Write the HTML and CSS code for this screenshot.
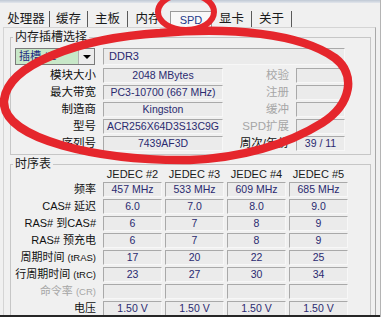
FILE: index.html
```html
<!DOCTYPE html>
<html>

<head>
    <meta charset="utf-8">
    <link rel="stylesheet" href="styles.css">
</head>

<body>
    <div id="window">
        <div class="topline"></div>

        <div class="tabs">
            <div class="tab">处理器</div>
            <div class="tab">缓存</div>
            <div class="tab">主板</div>
            <div class="tab nosep">内存</div>
            <div class="tab active">SPD</div>
            <div class="tab">显卡</div>
            <div class="tab">关于</div>
        </div>

        <div class="panel">
            <fieldset class="group">
                <legend>内存插槽选择</legend>
                <div class="slots">
                    <div class="select">插槽 #1<span class="drop"></span></div>
                    <div class="field wide">DDR3</div>

                    <div class="label">模块大小</div>
                    <div class="field">2048 MBytes</div>
                    <div class="label dim">校验</div>
                    <div class="field"></div>

                    <div class="label">最大带宽</div>
                    <div class="field">PC3-10700 (667 MHz)</div>
                    <div class="label dim">注册</div>
                    <div class="field"></div>

                    <div class="label">制造商</div>
                    <div class="field">Kingston</div>
                    <div class="label dim">缓冲</div>
                    <div class="field"></div>

                    <div class="label">型号</div>
                    <div class="field">ACR256X64D3S13C9G</div>
                    <div class="label dim">SPD扩展</div>
                    <div class="field"></div>

                    <div class="label">序列号</div>
                    <div class="field">7439AF3D</div>
                    <div class="label">周次/年份</div>
                    <div class="field">39 / 11</div>
                </div>
            </fieldset>

            <fieldset class="group">
                <legend>时序表</legend>
                <div class="timings">
                    <div></div>
                    <div class="head">JEDEC #2</div>
                    <div class="head">JEDEC #3</div>
                    <div class="head">JEDEC #4</div>
                    <div class="head">JEDEC #5</div>

                    <div class="label">频率</div>
                    <div class="field">457 MHz</div>
                    <div class="field">533 MHz</div>
                    <div class="field">609 MHz</div>
                    <div class="field">685 MHz</div>

                    <div class="label">CAS# 延迟</div>
                    <div class="field">6.0</div>
                    <div class="field">7.0</div>
                    <div class="field">8.0</div>
                    <div class="field">9.0</div>

                    <div class="label">RAS# 到CAS#</div>
                    <div class="field">6</div>
                    <div class="field">7</div>
                    <div class="field">8</div>
                    <div class="field">9</div>

                    <div class="label">RAS# 预充电</div>
                    <div class="field">6</div>
                    <div class="field">7</div>
                    <div class="field">8</div>
                    <div class="field">9</div>

                    <div class="label">周期时间 <small>(tRAS)</small></div>
                    <div class="field">17</div>
                    <div class="field">20</div>
                    <div class="field">22</div>
                    <div class="field">25</div>

                    <div class="label">行周期时间 <small>(tRC)</small></div>
                    <div class="field">23</div>
                    <div class="field">27</div>
                    <div class="field">30</div>
                    <div class="field">34</div>

                    <div class="label dim">命令率 <small>(CR)</small></div>
                    <div class="field"></div>
                    <div class="field"></div>
                    <div class="field"></div>
                    <div class="field"></div>

                    <div class="label">电压</div>
                    <div class="field">1.50 V</div>
                    <div class="field">1.50 V</div>
                    <div class="field">1.50 V</div>
                    <div class="field">1.50 V</div>
                </div>
            </fieldset>
        </div>

        <div class="bottomline"></div>
    </div>

    <!-- red marker circles drawn over the screenshot -->
    <svg class="marks" width="381" height="317" viewBox="0 0 381 317">
        <ellipse cx="186" cy="12" rx="28" ry="18" />
        <path class="big" d="M190,160 C100,161 2,140 4,101 C7,64 80,38 160,33 C230,27 300,33 335,58 C356,74 352,104 322,123 C287,145 240,158 190,160" />
    </svg>
</body>

</html>
```

FILE: styles.css
```css
body {
    margin: 0;
    background-color: #f0f0f0;
    font-family: "Liberation Sans", "Noto Sans CJK SC", sans-serif;
    color: #1a1a1a;
}

#window {
    width: 381px;
    height: 317px;
    box-sizing: border-box;
    border-right: 1px solid #b4b4b4;
    display: flex;
    flex-direction: column;
    overflow: hidden;
}

.topline {
    height: 3px;
    flex: none;
    background: linear-gradient(#bfc8d4, #e2e6ec);
}

.tabs {
    height: 24px;
    flex: none;
    display: flex;
    padding-left: 3px;
}

.tab {
    height: 16px;
    margin-top: 8px;
    line-height: 16px;
    font-size: 12.5px;
    text-align: center;
    box-sizing: border-box;
    border-right: 1px solid #5a5a5a;
}

.tab:nth-child(1) { width: 47px; }
.tab:nth-child(2) { width: 38px; }
.tab:nth-child(3) { width: 40px; }
.tab:nth-child(4) { width: 40px; }
.tab:nth-child(6) { width: 40px; }
.tab:nth-child(7) { width: 40px; }

.tab.nosep {
    border-right: none;
}

.tab.active {
    width: 42px;
    height: 18px;
    margin-top: 8px;
    margin-left: 2px;
    border: 1px solid #9a9a9a;
    border-bottom: none;
    background-color: #f8f8f8;
    color: #1d3a8a;
    font-size: 11px;
}

.panel {
    flex: 1;
    margin: 0 4px 0 3px;
    border: 1px solid #d4d4d4;
    border-right-color: #a8a8a8;
    border-bottom: none;
    padding: 2px 4px 0 6px;
    overflow: hidden;
}

.group {
    margin: 0 0 2px 0;
    padding: 0 4px;
    border: 1px solid #c6c6c6;
}

legend {
    font-size: 12px;
    line-height: 14px;
    padding: 0 2px;
    margin-left: -2px;
}

.slots {
    display: grid;
    grid-template-columns: 88px 120px 73px 49px;
    grid-template-rows: 18px;
    grid-auto-rows: 15px;
    row-gap: 2px;
    padding: 4px 0 3px 0;
}

.timings {
    display: grid;
    grid-template-columns: 85px 59px 59px 59px 59px;
    grid-template-rows: 12px;
    grid-auto-rows: 15px;
    column-gap: 3px;
    row-gap: 2px;
    margin-top: -3px;
}

.timings .field:nth-child(5n+2) {
    margin-left: 0;
}

.head {
    font-size: 11px;
    line-height: 12px;
    text-align: center;
    white-space: nowrap;
    margin-bottom: 1px;
}

.label {
    font-size: 11.5px;
    line-height: 15px;
    text-align: right;
    white-space: nowrap;
    padding-right: 7px;
    color: #111;
}

.timings .label {
    padding-right: 4px;
    font-size: 11px;
}

.label small {
    font-size: 9.5px;
}

.label.dim {
    color: #a6a6a6;
}

.field {
    box-sizing: border-box;
    height: 15px;
    border: 1px solid;
    border-color: #a9a9a9 #f7f7f7 #f7f7f7 #a9a9a9;
    background-color: #ebebeb;
    color: #2a2a70;
    font-size: 10.5px;
    line-height: 13px;
    text-align: center;
    white-space: nowrap;
    overflow: hidden;
}

.field.wide {
    grid-column: 2 / 5;
    height: 17px;
    line-height: 15px;
    text-align: left;
    padding-left: 5px;
    font-size: 11px;
}

.select {
    width: 80px;
    height: 17px;
    box-sizing: border-box;
    border: 1px solid #7a7a7a;
    background-color: #c8e8c8;
    color: #1d2a80;
    font-size: 11px;
    line-height: 15px;
    padding-left: 3px;
    display: flex;
    justify-content: space-between;
}

.drop {
    width: 15px;
    height: 15px;
    background-color: #ececec;
    border-left: 1px solid #b0b0b0;
    display: flex;
    align-items: center;
    justify-content: center;
}

.drop::after {
    content: "";
    border-left: 4px solid transparent;
    border-right: 4px solid transparent;
    border-top: 4px solid #000;
}

.bottomline {
    height: 2px;
    flex: none;
    background-color: #262626;
}

.marks {
    position: absolute;
    top: 0;
    left: 0;
    pointer-events: none;
}

.marks ellipse,
.marks path {
    fill: none;
    stroke: #e5262c;
    stroke-width: 6;
    stroke-linecap: round;
}

.marks path.big {
    stroke-width: 8.5;
}
```
